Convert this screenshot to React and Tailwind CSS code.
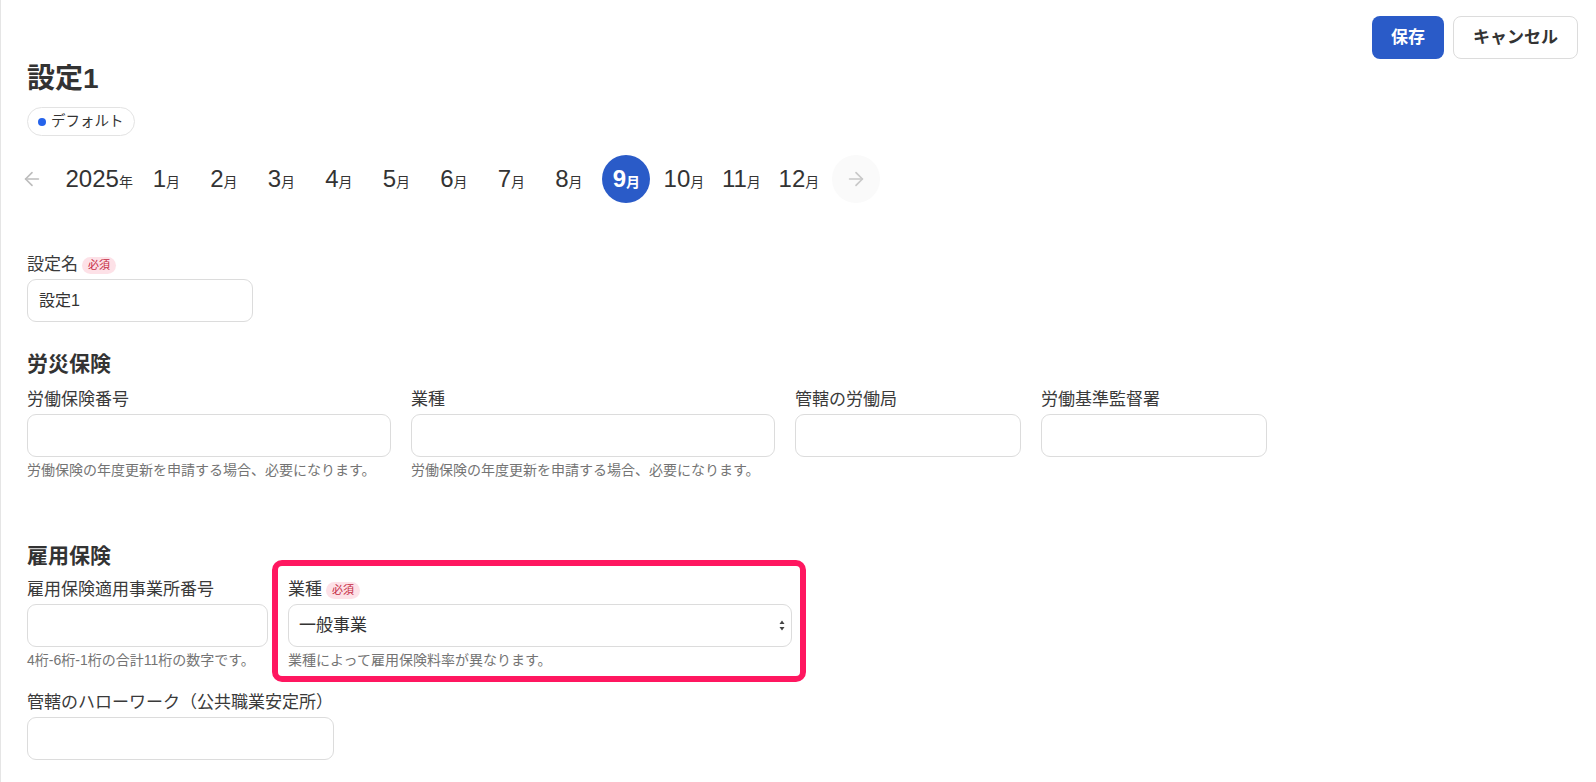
import { ArrowLeft, ArrowRight } from 'lucide-react';

const months = [1, 2, 3, 4, 5, 6, 7, 8, 9, 10, 11, 12];

function Required() {
  return (
    <span className="ml-[4px] inline-flex h-[17px] items-center rounded-full bg-[#fde1e7] px-[6px] text-[11px] leading-none text-[#c52a43]">
      必須
    </span>
  );
}

function Field({ label, required, help, width, children }) {
  return (
    <div className={`flex flex-col ${width}`}>
      <div className="flex h-6 items-center text-[17px] leading-6 text-[#3a3a3a]">
        {label}
        {required && <Required />}
      </div>
      <div className="mt-[2px]">
        {children || <div className="h-[43px] w-full rounded-[9px] border border-[#dcdcdc] bg-white" />}
      </div>
      {help && <p className="mt-[3px] text-[14px] leading-5 text-[#747474]">{help}</p>}
    </div>
  );
}

function SelectArrows() {
  return (
    <svg width="6" height="11" viewBox="0 0 6 11" className="text-[#444]">
      <path d="M3 0.5 L5.5 4 L0.5 4 Z" fill="currentColor" />
      <path d="M3 10.5 L5.5 7 L0.5 7 Z" fill="currentColor" />
    </svg>
  );
}

export default function App() {
  return (
    <div
      className="min-h-screen border-l border-[#e5e5e5] bg-white pb-6 pl-[26px] pr-[18px] pt-4 text-[#333]"
      style={{ fontFamily: '"Liberation Sans", "Noto Sans CJK JP", sans-serif' }}
    >
      <div className="flex justify-end gap-[9px]">
        <button className="h-[43px] rounded-lg bg-[#2a5bc8] px-[19px] text-[17px] font-bold text-white">保存</button>
        <button className="h-[43px] rounded-lg border border-[#dcdcdc] bg-white px-[19px] text-[17px] font-bold text-[#333]">
          キャンセル
        </button>
      </div>

      <h1 className="mt-[2px] text-[28px] font-bold leading-9 text-[#333]">設定1</h1>

      <div className="mt-[10px] inline-flex h-[29px] items-center gap-[5px] rounded-full border border-[#e3e3e3] px-[10px] text-[14.5px] text-[#333]">
        <span className="h-2 w-2 rounded-full bg-[#2563eb]" />
        デフォルト
      </div>

      <nav className="-ml-[19px] mt-[19px] flex items-center gap-[9.5px]">
        <button className="flex h-12 w-12 items-center justify-center rounded-full text-[#bdbdbd]">
          <ArrowLeft className="h-[22px] w-[22px]" strokeWidth={1.8} />
        </button>
        <div className="flex h-12 items-baseline pt-[12px] text-[#333]">
          <span className="text-[24px] leading-none">2025</span>
          <span className="text-[14px] leading-none">年</span>
        </div>
        {months.map((m) =>
          m === 9 ? (
            <button key={m} className="flex h-12 w-12 items-baseline justify-center rounded-full bg-[#2a5bc8] pt-[12px] text-white">
              <span className="text-[24px] font-bold leading-none">{m}</span>
              <span className="text-[14px] font-bold leading-none">月</span>
            </button>
          ) : (
            <button key={m} className="flex h-12 w-12 items-baseline justify-center rounded-full pt-[12px] text-[#333]">
              <span className="text-[24px] leading-none">{m}</span>
              <span className="text-[14px] leading-none">月</span>
            </button>
          )
        )}
        <button className="flex h-12 w-12 items-center justify-center rounded-full bg-[#fafafa] text-[#c8c8c8]">
          <ArrowRight className="h-[22px] w-[22px]" strokeWidth={1.8} />
        </button>
      </nav>

      <div className="mt-[50px]">
        <Field label="設定名" required width="w-[226px]">
          <div className="flex h-[43px] items-center rounded-[9px] border border-[#dcdcdc] px-[11px] text-[16px]">設定1</div>
        </Field>
      </div>

      <h2 className="mt-[28px] text-[21px] font-bold leading-7">労災保険</h2>
      <div className="mt-[10px] flex items-start gap-5">
        <Field label="労働保険番号" width="w-[364px]" help="労働保険の年度更新を申請する場合、必要になります。" />
        <Field label="業種" width="w-[364px]" help="労働保険の年度更新を申請する場合、必要になります。" />
        <Field label="管轄の労働局" width="w-[226px]" />
        <Field label="労働基準監督署" width="w-[226px]" />
      </div>

      <h2 className="mt-[62px] text-[21px] font-bold leading-7">雇用保険</h2>
      <div className="mt-[8px] flex items-start gap-5">
        <Field label="雇用保険適用事業所番号" width="w-[241px]" help="4桁-6桁-1桁の合計11桁の数字です。" />
        <div className="relative">
          <div className="pointer-events-none absolute -bottom-[12px] -left-[16px] -right-[14px] -top-[18px] rounded-[10px] border-[6px] border-[#ff1760]" />
          <Field label="業種" required width="w-[504px]" help="業種によって雇用保険料率が異なります。">
            <div className="flex h-[43px] items-center justify-between rounded-[9px] border border-[#dcdcdc] pl-[10px] pr-[6px] text-[17px]">
              <span>一般事業</span>
              <SelectArrows />
            </div>
          </Field>
        </div>
      </div>

      <div className="mt-[21px]">
        <Field label="管轄のハローワーク（公共職業安定所）" width="w-[307px]" />
      </div>
    </div>
  );
}
